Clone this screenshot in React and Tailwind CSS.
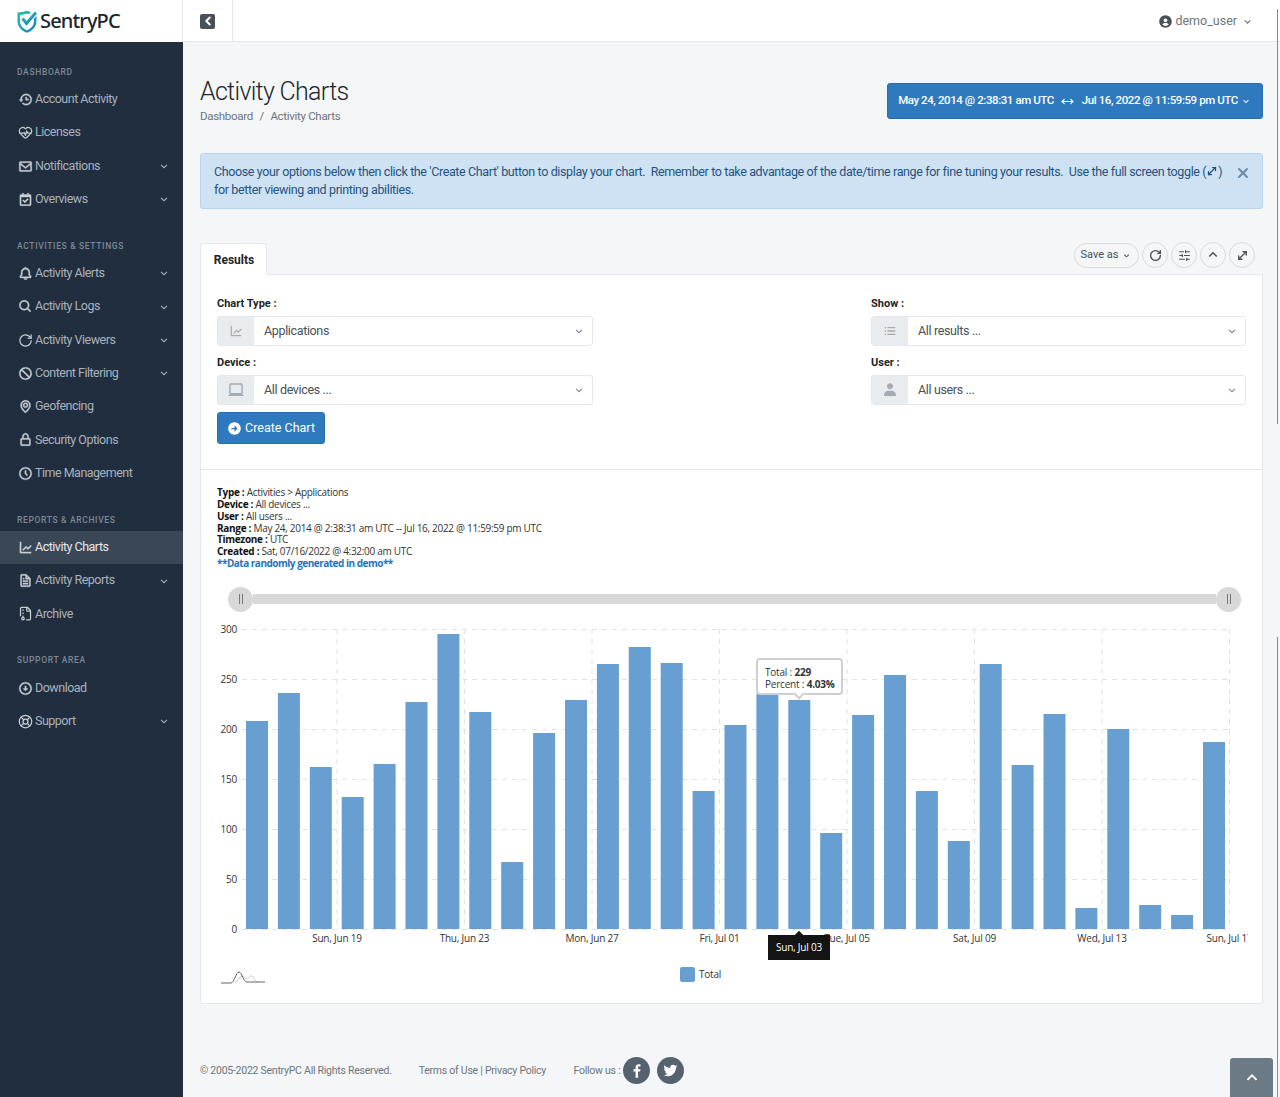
import {
  BiHistory, BiEnvelope, BiCalendarCheck, BiBell, BiSearch, BiBlock, BiMap, BiLockAlt, BiTimeFive,
  BiLineChart, BiFile, BiDownArrowCircle, BiChevronDown, BiChevronUp, BiLaptop, BiListUl,
  BiSolidUser, BiSolidUserCircle, BiSolidRightArrowCircle, BiLogoFacebook, BiLogoTwitter,
} from 'react-icons/bi';
import { HeartPulse, FileArchive, MoveHorizontal, MoveDiagonal, RotateCw, LifeBuoy, ChevronLeft, SlidersHorizontal, X } from 'lucide-react';

const sections = [
  {
    title: 'Dashboard',
    items: [
      { label: 'Account Activity', icon: BiHistory },
      { label: 'Licenses', icon: HeartPulse, line: true },
      { label: 'Notifications', icon: BiEnvelope, more: true },
      { label: 'Overviews', icon: BiCalendarCheck, more: true },
    ],
  },
  {
    title: 'Activities & Settings',
    items: [
      { label: 'Activity Alerts', icon: BiBell, more: true },
      { label: 'Activity Logs', icon: BiSearch, more: true },
      { label: 'Activity Viewers', icon: RotateCw, line: true, more: true },
      { label: 'Content Filtering', icon: BiBlock, more: true },
      { label: 'Geofencing', icon: BiMap },
      { label: 'Security Options', icon: BiLockAlt },
      { label: 'Time Management', icon: BiTimeFive },
    ],
  },
  {
    title: 'Reports & Archives',
    items: [
      { label: 'Activity Charts', icon: BiLineChart, active: true },
      { label: 'Activity Reports', icon: BiFile, more: true },
      { label: 'Archive', icon: FileArchive, line: true },
    ],
  },
  {
    title: 'Support Area',
    items: [
      { label: 'Download', icon: BiDownArrowCircle },
      { label: 'Support', icon: LifeBuoy, line: true, more: true },
    ],
  },
];

const bars = [208, 236, 162, 132, 165, 227, 295, 217, 67, 196, 229, 265, 282, 266, 138, 204, 235, 229, 96, 214, 254, 138, 88, 265, 164, 215, 21, 200, 24, 14, 187];
const yTicks = [300, 250, 200, 150, 100, 50, 0];
const xTicks = [
  [337, 'Sun, Jun 19'], [464.5, 'Thu, Jun 23'], [592, 'Mon, Jun 27'], [719.5, 'Fri, Jul 01'],
  [847, 'Tue, Jul 05'], [974.5, 'Sat, Jul 09'], [1102, 'Wed, Jul 13'], [1229.5, 'Sun, Jul 17'],
];

const Logo = () => (
  <svg width="22" height="23" viewBox="0 0 22 23" fill="none">
    <defs>
      <linearGradient id="shield" x1="0" y1="0" x2="1" y2="1">
        <stop offset="0" stopColor="#22c3a6" />
        <stop offset="1" stopColor="#1f7fc4" />
      </linearGradient>
    </defs>
    <path d="M1.5 2.5C5 2.5 8 2 11 0.8 12.5 1.4 13.5 1.8 15 2.1L13 4.1C12.3 3.9 11.7 3.7 11 3.4 8.8 4.3 6.500 4.800 4 5V11C4 15.500 7 18.600 11 20.200 15 18.600 18 15.500 18 11V8.500L20.500 6V11C20.500 16.800 16.500 20.800 11 22.800 5.500 20.800 1.500 16.800 1.500 11Z" fill="url(#shield)" />
    <path d="M6.500 8.500L10.500 13.500 20 2.500" stroke="url(#shield)" strokeWidth="3" fill="none" />
  </svg>
);

const NavItem = ({ item }) => {
  const Icon = item.icon;
  return (
    <div className={`flex h-[33.33px] items-center pl-[17.500px] pr-[12px] ${item.active ? 'bg-[#3a4757] text-[#e6e9ed]' : 'text-[#aab2bd]'}`}>
      <Icon className={item.line ? 'h-[15px] w-[15px] shrink-0 text-[#c8ced6]' : 'h-[15px] w-[15px] shrink-0 text-[#c8ced6] [stroke-width:0.6px]'} />
      <span className="ml-[2.500px] flex-1 text-[12.5px] tracking-[-0.5px]">{item.label}</span>
      {item.more && <BiChevronDown className="h-[14px] w-[14px]" />}
    </div>
  );
};

const Sidebar = () => (
  <aside className="flex w-[183px] shrink-0 flex-col">
    <div className="flex h-[42px] items-center border-r border-[#e4e7eb] bg-white pl-[16px]">
      <Logo />
      <span className="ml-[2px] font-['Noto_Sans',sans-serif] text-[20px] font-medium tracking-[-0.85px] text-[#1c2530]">SentryPC</span>
    </div>
    <nav className="flex-1 bg-[#212e3f] pt-[23px]">
      {sections.map((section, i) => (
        <div key={section.title} className={i > 0 ? 'mt-[23px]' : ''}>
          <div className="mb-[3.700px] flex h-[14px] items-center pl-[17px] text-[8.5px] font-medium uppercase tracking-[0.65px] text-[#7d8896]">{section.title}</div>
          {section.items.map((item) => (
            <NavItem key={item.label} item={item} />
          ))}
        </div>
      ))}
    </nav>
  </aside>
);

const Header = () => (
  <header className="flex h-[42px] items-stretch border-b border-[#e4e7eb] bg-white">
    <div className="flex w-[50px] items-center justify-center border-r border-[#e4e7eb] pt-[1px]">
      <div className="flex h-[15px] w-[15px] items-center justify-center rounded-[2px] bg-[#495057] text-white">
        <ChevronLeft className="h-[14px] w-[14px]" strokeWidth={3.5} />
      </div>
    </div>
    <div className="ml-auto mr-[26px] flex items-center pt-[1px] text-[12.5px] text-[#6c757d]">
      <BiSolidUserCircle className="mr-[2px] h-[15px] w-[15px] text-[#495057]" />
      <span>demo_user</span>
      <BiChevronDown className="ml-[4px] h-[13px] w-[13px]" />
    </div>
  </header>
);

const SelectBox = ({ icon: Icon, value, iconClass }) => (
  <div className="flex h-[30px] items-stretch overflow-hidden rounded-[3px] border border-[#e4e7eb] bg-white">
    <div className="flex w-[36px] items-center justify-center bg-[#e9ecef] text-[#a3abb3]">
      <Icon className={iconClass} />
    </div>
    <div className="flex flex-1 items-center pl-[10px] pr-[6px] text-[12.5px] tracking-[-0.35px] text-[#495057]">
      <span className="flex-1">{value}</span>
      <BiChevronDown className="h-[14px] w-[14px] text-[#7d8792]" />
    </div>
  </div>
);

const RoundButton = ({ children }) => (
  <div className="flex h-[26px] w-[26px] items-center justify-center rounded-full border border-[#d8dce0] text-[#495057]">{children}</div>
);

const Chart = () => (
  <svg width="1060" height="345" viewBox="201 620 1060 345" className="block font-['Open_Sans',sans-serif] tracking-[-0.2px]">
    {yTicks.map((t) => (
      <g key={t}>
        <line x1="242" x2="1230" y1={929.5 - t} y2={929.5 - t} stroke="#e2e2e2" strokeDasharray="5 5" />
        <text x="237" y={933 - t} textAnchor="end" fontSize="10" fill="#333">{t}</text>
      </g>
    ))}
    {xTicks.map(([x]) => (
      <line key={x} x1={x} x2={x} y1="629" y2="929" stroke="#e2e2e2" strokeDasharray="5 5" />
    ))}
    {bars.map((v, i) => (
      <rect key={i} x={246 + i * 31.9} y={929 - v} width="22" height={v} fill="#679fd2" />
    ))}
    <svg x="201" y="620" width="1047" height="345" viewBox="201 620 1047 345">
      {xTicks.map(([x, label]) => (
        <text key={x} x={x} y="942" textAnchor="middle" fontSize="10" fill="#333">{label}</text>
      ))}
    </svg>
  </svg>
);

const Tooltips = () => (
  <>
    <div className="absolute left-[555px] top-[38px] h-[37px] w-[87px] rounded-[4px] border-2 border-[#cfcfcf] bg-white pl-[7px] pt-[6.500px] font-['Open_Sans',sans-serif] text-[10px] leading-[12px] tracking-[-0.2px] text-[#333]">
      <div>Total : <b>229</b></div>
      <div>Percent : <b>4.03%</b></div>
      <div className="absolute bottom-[-5px] left-[37px] h-[8px] w-[8px] rotate-45 border-b-2 border-r-2 border-[#cfcfcf] bg-white" />
    </div>
    <div className="absolute left-[567px] top-[315px] flex h-[25px] w-[62px] items-center justify-center bg-[#141414] font-['Open_Sans',sans-serif] text-[10px] tracking-[-0.2px] text-white">
      Sun, Jul 03
      <div className="absolute left-[28px] top-[-3px] h-[6px] w-[6px] rotate-45 bg-[#141414]" />
    </div>
  </>
);

const Handle = () => (
  <div className="z-10 flex h-[25px] w-[25px] shrink-0 items-center justify-center gap-[2px] rounded-full bg-[#d8d8d8]">
    <span className="h-[10px] w-px bg-[#777]" />
    <span className="h-[10px] w-px bg-[#777]" />
  </div>
);

const InfoLine = ({ name, children }) => (
  <div>
    <b className="font-bold text-[#111]">{name} :</b> {children}
  </div>
);

export default function App() {
  return (
    <div className="flex h-[1097px] w-[1280px] overflow-hidden bg-[#f4f6f8] font-['Roboto',sans-serif]">
      <Sidebar />
      <div className="relative flex min-w-0 flex-1 flex-col">
        <Header />
        <main className="flex-1 px-[17px]">
          <div className="mt-[34px] flex items-start justify-between">
            <div>
              <h1 className="text-[25px] font-light leading-[32px] tracking-[-0.7px] text-[#212529]">Activity Charts</h1>
              <div className="flex text-[11.500px] tracking-[-0.3px] text-[#6c757d]">
                <span>Dashboard</span>
                <span className="mx-[6.500px]">/</span>
                <span>Activity Charts</span>
              </div>
            </div>
            <div className="mt-[7px] flex h-[36px] w-[376px] items-center justify-center whitespace-nowrap rounded-[3px] border border-[#2a6dab] bg-[#2f7abf] text-[11.500px] font-medium tracking-[-0.42px] text-white">
              <span>May 24, 2014 @ 2:38:31 am UTC</span>
              <MoveHorizontal className="mx-[7.500px] h-[13px] w-[13px]" />
              <span>Jul 16, 2022 @ 11:59:59 pm UTC</span>
              <BiChevronDown className="ml-[2px] h-[12px] w-[12px]" />
            </div>
          </div>

          <div className="relative mt-[28px] h-[56px] rounded-[3px] border border-[#b9d6ee] bg-[#cfe2f3] px-[13px] pt-[9px] text-[12.5px] leading-[18px] tracking-[-0.375px] text-[#24527f]">
            <div className="w-[1020px]">
              Choose your options below then click the 'Create Chart' button to display your chart.&nbsp; Remember to take advantage of the date/time range for fine tuning your results.&nbsp; Use the full screen toggle (<MoveDiagonal className="inline h-[12px] w-[12px] align-[-1px]" strokeWidth={2.5} />) for better viewing and printing abilities.
            </div>
            <X className="absolute right-[11px] top-[11px] h-[16px] w-[16px] text-[#6d8aa6]" strokeWidth={3} />
          </div>

          <div className="mt-[34px] flex h-[32px] items-start justify-between">
            <div className="z-10 flex h-[32px] w-[67px] items-center justify-center rounded-t-[3px] border border-b-0 border-[#e4e7eb] bg-white pl-[1px] text-[12px] font-bold text-[#212529]">Results</div>
            <div className="mr-[8px] -mt-[1px] flex items-center gap-[3px]">
              <div className="flex h-[25px] w-[65px] items-center justify-center rounded-full border border-[#d8dce0] text-[11px] text-[#495057]">
                Save as
                <BiChevronDown className="ml-[3px] h-[11px] w-[11px]" />
              </div>
              <RoundButton><RotateCw className="h-[13px] w-[13px]" strokeWidth={2.5} /></RoundButton>
              <RoundButton><SlidersHorizontal className="h-[13px] w-[13px]" /></RoundButton>
              <RoundButton><BiChevronUp className="h-[18px] w-[18px]" /></RoundButton>
              <RoundButton><MoveDiagonal className="h-[13px] w-[13px]" strokeWidth={2.5} /></RoundButton>
            </div>
          </div>

          <section className="relative -mt-px h-[730px] rounded-b-[3px] border border-[#e4e7eb] bg-white">
            <div className="h-[195px] border-b border-[#e4e7eb] px-[16px] pt-[22px]">
              <div className="flex justify-between">
                <div className="w-[376px]">
                  <div className="mb-[6px] text-[11px] font-bold leading-[13px] text-[#212529]">Chart Type :</div>
                  <SelectBox icon={BiLineChart} value="Applications" iconClass="h-[14px] w-[14px]" />
                  <div className="mb-[6px] mt-[10px] text-[11px] font-bold leading-[13px] text-[#212529]">Device :</div>
                  <SelectBox icon={BiLaptop} value="All devices ..." iconClass="h-[18px] w-[18px]" />
                  <div className="mt-[7px] flex h-[32px] w-[108px] items-center justify-center rounded-[3px] border border-[#2a6dab] bg-[#2f7abf] pt-[1px] text-[12.5px] text-white">
                    <BiSolidRightArrowCircle className="mr-[3px] h-[15px] w-[15px]" />
                    Create Chart
                  </div>
                </div>
                <div className="w-[375px]">
                  <div className="mb-[6px] text-[11px] font-bold leading-[13px] text-[#212529]">Show :</div>
                  <SelectBox icon={BiListUl} value="All results ..." iconClass="h-[16px] w-[16px]" />
                  <div className="mb-[6px] mt-[10px] text-[11px] font-bold leading-[13px] text-[#212529]">User :</div>
                  <SelectBox icon={BiSolidUser} value="All users ..." iconClass="h-[16px] w-[16px]" />
                </div>
              </div>
            </div>

            <div className="px-[16px] pt-[17px] font-['Open_Sans',sans-serif] text-[10px] leading-[11.800px] tracking-[-0.3px] text-[#333]">
              <InfoLine name="Type">Activities &gt; Applications</InfoLine>
              <InfoLine name="Device">All devices ...</InfoLine>
              <InfoLine name="User">All users ...</InfoLine>
              <InfoLine name="Range">May 24, 2014 @ 2:38:31 am UTC -- Jul 16, 2022 @ 11:59:59 pm UTC</InfoLine>
              <InfoLine name="Timezone">UTC</InfoLine>
              <InfoLine name="Created">Sat, 07/16/2022 @ 4:32:00 am UTC</InfoLine>
              <div className="font-bold tracking-[-0.5px] text-[#1f74c0]">**Data randomly generated in demo**</div>
            </div>

            <div className="ml-[27px] mr-[21px] mt-[17px] flex items-center">
              <Handle />
              <div className="h-[10px] flex-1 bg-[#d8d8d8]" />
              <Handle />
            </div>

            <div className="relative mt-[8px]">
              <Chart />
              <Tooltips />
            </div>

            <div className="relative flex h-[20px] items-center justify-center pr-[62px] font-['Open_Sans',sans-serif] text-[10px] tracking-[-0.2px] text-[#333]">
              <svg className="absolute left-[20px] top-[5px]" width="44" height="14" viewBox="0 0 44 14" fill="none">
                <path d="M14 12c3 0 4-6 7-6s3 4 5 3 3-4 5-3 3 6 6 6" stroke="#c9c9c9" />
                <path d="M0 13h10c3 0 5-11 8-11s4 10 8 10h18" stroke="#666" />
              </svg>
              <span className="h-[15px] w-[15px] rounded-[2px] bg-[#679fd2]" />
              <span className="ml-[4px]">Total</span>
            </div>
          </section>

          <footer className="mt-[53px] flex items-center text-[10.500px] tracking-[-0.25px] text-[#6c757d]">
            <span>© 2005-2022 SentryPC All Rights Reserved.</span>
            <span className="ml-[27px]">Terms of Use | Privacy Policy</span>
            <span className="ml-[27.500px]">Follow us :</span>
            <span className="ml-[3px] flex h-[27px] w-[27px] items-center justify-center rounded-full bg-[#566270] text-white"><BiLogoFacebook className="h-[18px] w-[18px]" /></span>
            <span className="ml-[7px] flex h-[27px] w-[27px] items-center justify-center rounded-full bg-[#566270] text-white"><BiLogoTwitter className="h-[17px] w-[17px]" /></span>
          </footer>
        </main>
        <div className="absolute bottom-0 right-[7px] flex h-[39px] w-[43px] items-center justify-center rounded-t-[3px] bg-[#6c7a86] text-white">
          <BiChevronUp className="h-[22px] w-[22px]" />
        </div>
        <div className="absolute right-[2px] top-[9px] h-[415px] w-[1.500px] bg-[#8a8a8a]" />
        <div className="absolute bottom-0 right-[2px] top-[637px] w-[1.500px] bg-[#8a8a8a]" />
      </div>
    </div>
  );
}
